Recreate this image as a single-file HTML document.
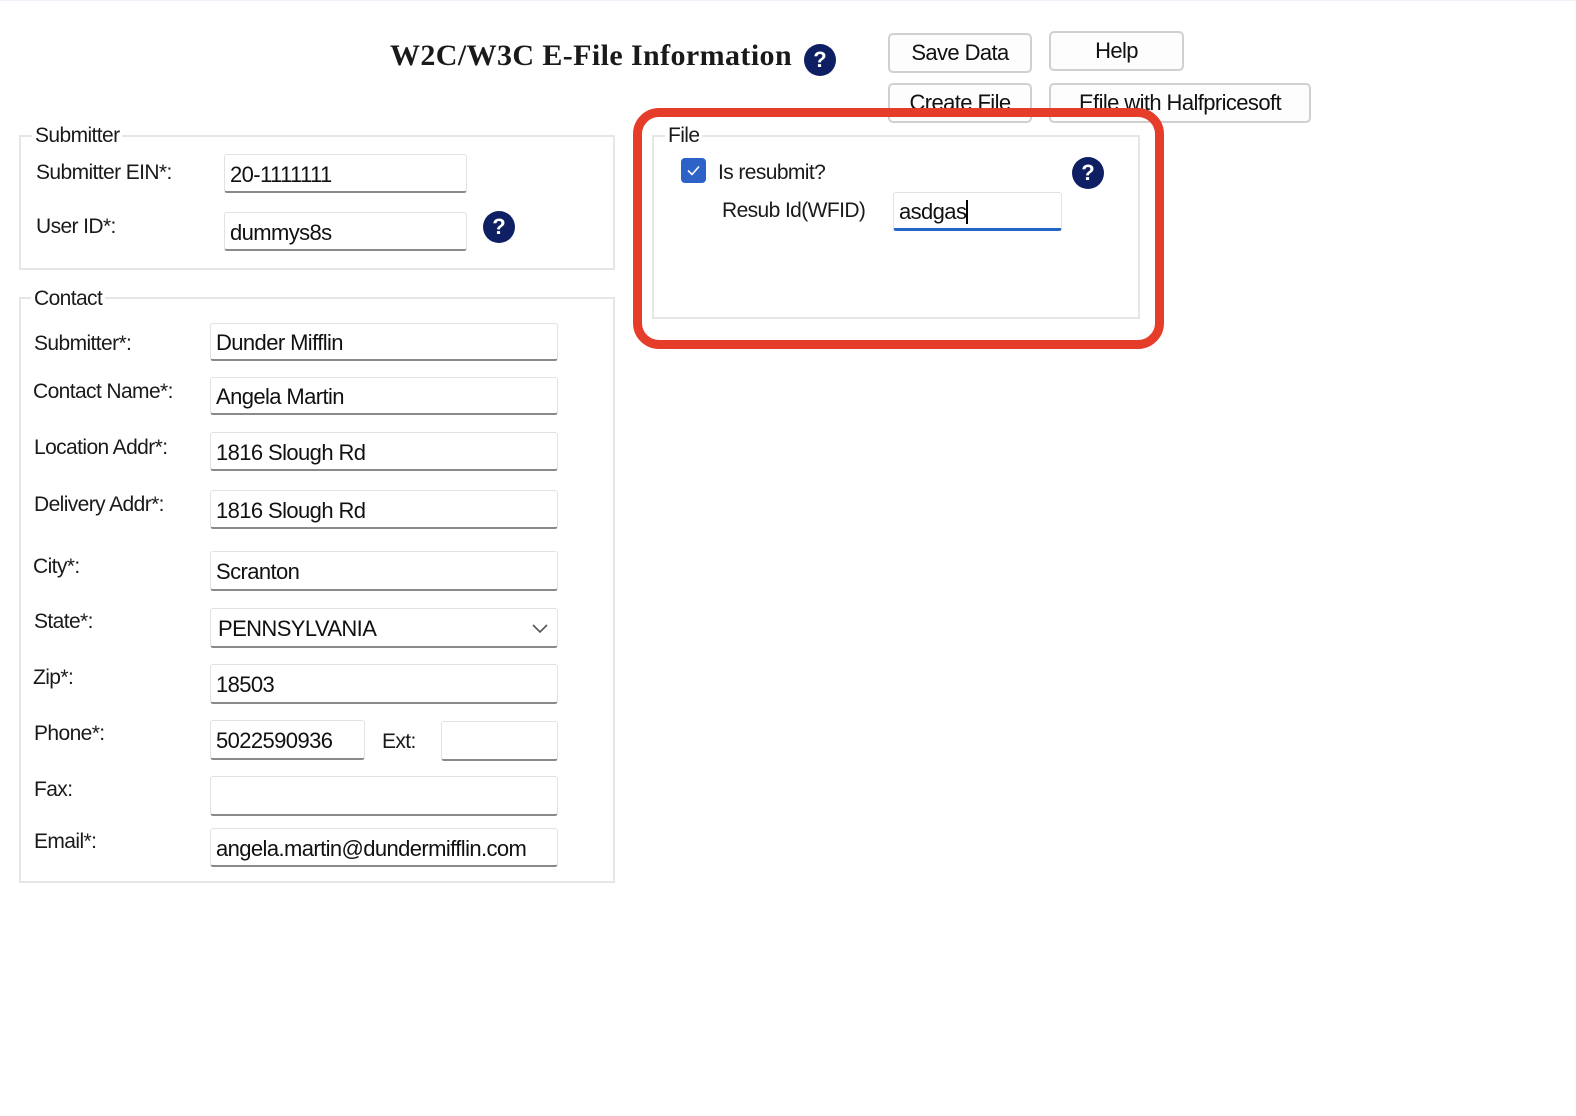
<!DOCTYPE html>
<html><head><meta charset="utf-8"><style>
*{box-sizing:border-box;margin:0;padding:0}
body{width:1576px;height:1116px;background:#fff;position:relative;overflow:hidden;font-family:"Liberation Sans",sans-serif;color:#1a1a1a}
.a{position:absolute}
.lbl{position:absolute;font-size:21px;letter-spacing:-0.6px;line-height:24px;white-space:nowrap}
.inp{position:absolute;background:#fff;border:1px solid #e2e2e2;border-bottom:2px solid #8a8a8a;border-radius:3px;font-size:22px;letter-spacing:-0.6px;padding-left:5px;padding-top:3px;display:flex;align-items:center;white-space:nowrap;color:#111}
.grp{position:absolute;border:2px solid #e6e6e6}
.leg{position:absolute;background:#fff;font-size:21px;letter-spacing:-0.6px;padding:0 3px;line-height:24px}
.btn{position:absolute;background:#fdfdfd;border:2px solid #d0d0d0;border-radius:5px;font-size:22px;letter-spacing:-0.6px;display:flex;align-items:center;justify-content:center;color:#111}
.q{position:absolute;width:32px;height:32px;border-radius:50%;background:#0f1f63;color:#fff;font-weight:bold;font-size:22px;display:flex;align-items:center;justify-content:center;font-family:"Liberation Sans",sans-serif}
</style></head><body>
<div class="a" style="left:0;top:0;width:1576px;height:1px;background:#eef2fa"></div>
<div class="a" style="left:390px;top:39px;font-family:'Liberation Serif',serif;font-weight:bold;font-size:30px;letter-spacing:0.4px;white-space:nowrap">W2C/W3C E-File Information</div>
<div class="q" style="left:804px;top:44px">?</div>
<div class="btn" style="left:888px;top:33px;width:144px;height:40px">Save Data</div>
<div class="btn" style="left:1049px;top:31px;width:135px;height:40px">Help</div>
<div class="btn" style="left:888px;top:83px;width:144px;height:40px">Create File</div>
<div class="btn" style="left:1049px;top:83px;width:262px;height:40px">Efile with Halfpricesoft</div>

<div class="grp" style="left:19px;top:135px;width:596px;height:135px"></div>
<div class="leg" style="left:32px;top:124px">Submitter</div>
<div class="lbl" style="left:36px;top:161px">Submitter EIN*:</div>
<div class="inp" style="left:224px;top:154px;width:243px;height:39px">20-1111111</div>
<div class="lbl" style="left:36px;top:215px">User ID*:</div>
<div class="inp" style="left:224px;top:212px;width:243px;height:39px">dummys8s</div>
<div class="q" style="left:483px;top:211px">?</div>

<div class="grp" style="left:19px;top:297px;width:596px;height:586px"></div>
<div class="leg" style="left:31px;top:287px">Contact</div>
<div class="lbl" style="left:34px;top:332px">Submitter*:</div>
<div class="inp" style="left:210px;top:323px;width:348px;height:38px">Dunder Mifflin</div>
<div class="lbl" style="left:33px;top:380px">Contact Name*:</div>
<div class="inp" style="left:210px;top:377px;width:348px;height:38px">Angela Martin</div>
<div class="lbl" style="left:34px;top:436px">Location Addr*:</div>
<div class="inp" style="left:210px;top:432px;width:348px;height:39px">1816 Slough Rd</div>
<div class="lbl" style="left:34px;top:493px">Delivery Addr*:</div>
<div class="inp" style="left:210px;top:490px;width:348px;height:39px">1816 Slough Rd</div>
<div class="lbl" style="left:33px;top:555px">City*:</div>
<div class="inp" style="left:210px;top:551px;width:348px;height:40px">Scranton</div>
<div class="lbl" style="left:34px;top:610px">State*:</div>
<div class="inp" style="left:210px;top:608px;width:348px;height:40px;padding-left:7px">PENNSYLVANIA<svg style="position:absolute;right:8px;top:13px" width="18" height="12" viewBox="0 0 18 12"><path d="M2 3l7 7 7-7" fill="none" stroke="#555" stroke-width="1.6"/></svg></div>
<div class="lbl" style="left:33px;top:666px">Zip*:</div>
<div class="inp" style="left:210px;top:664px;width:348px;height:40px">18503</div>
<div class="lbl" style="left:34px;top:722px">Phone*:</div>
<div class="inp" style="left:210px;top:720px;width:155px;height:40px">5022590936</div>
<div class="lbl" style="left:382px;top:730px">Ext:</div>
<div class="inp" style="left:441px;top:721px;width:117px;height:40px"></div>
<div class="lbl" style="left:34px;top:778px">Fax:</div>
<div class="inp" style="left:210px;top:776px;width:348px;height:40px"></div>
<div class="lbl" style="left:34px;top:830px">Email*:</div>
<div class="inp" style="left:210px;top:828px;width:348px;height:39px">angela.martin@dundermifflin.com</div>

<div class="grp" style="left:652px;top:135px;width:488px;height:184px"></div>
<div class="leg" style="left:665px;top:124px">File</div>
<div class="a" style="left:681px;top:158px;width:25px;height:25px;background:#2d62c6;border-radius:4px"><svg width="25" height="25" viewBox="0 0 25 25"><path d="M7 12.5l4 4 7-8" fill="none" stroke="#fff" stroke-width="1.6"/></svg></div>
<div class="lbl" style="left:718px;top:161px">Is resubmit?</div>
<div class="q" style="left:1072px;top:157px">?</div>
<div class="lbl" style="left:722px;top:199px">Resub Id(WFID)</div>
<div class="inp" style="left:893px;top:192px;width:169px;height:39px;border-bottom:3px solid #2366c7">asdgas<span style="display:inline-block;width:2px;height:24px;background:#000"></span></div>

<div class="a" style="left:633px;top:108px;width:531px;height:241px;border:9px solid #e53d2a;border-radius:26px"></div>
</body></html>
